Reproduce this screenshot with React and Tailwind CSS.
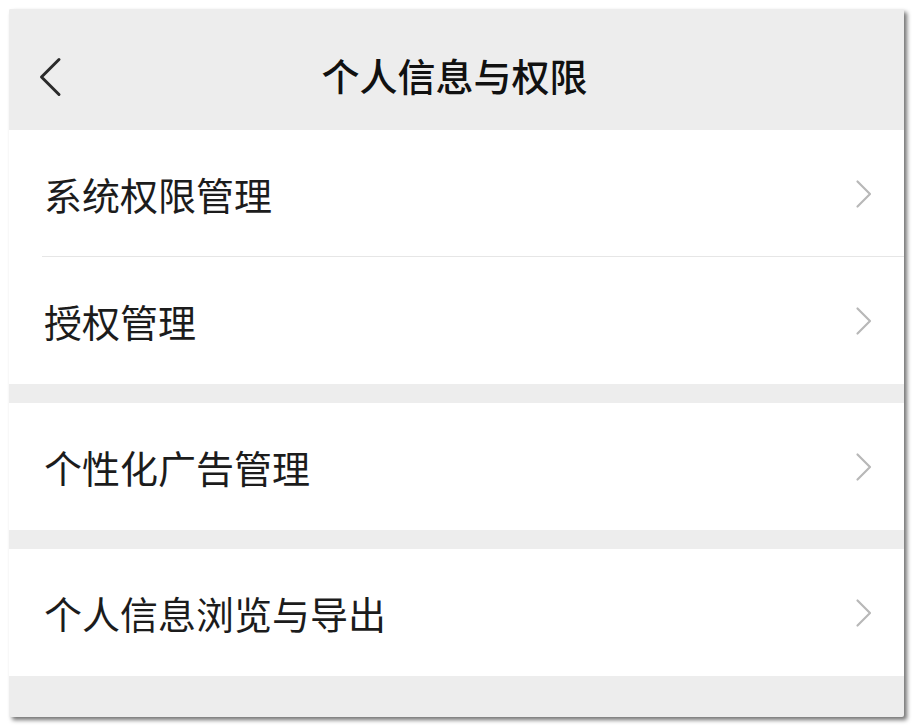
import React from "react";

const Chevron = () => (
  <svg width="18" height="30" viewBox="0 0 18 30" className="shrink-0">
    <path d="M2.5 2.5 L15 15 L2.5 27.5" fill="none" stroke="#b8b8b8" strokeWidth="2.2" strokeLinecap="round" strokeLinejoin="round" />
  </svg>
);

const Row = ({ label, divider }) => (
  <div className="relative flex h-[127px] items-center justify-between bg-white pl-[35px] pr-[31px]">
    <span className="text-[38px] leading-none text-[#1c1c1c]">{label}</span>
    <Chevron />
    {divider && <div className="absolute bottom-0 left-[33px] right-0 h-px bg-[#e6e6e6]" />}
  </div>
);

export default function App() {
  return (
    <div className="h-[728px] w-[915px] bg-white pl-[9px] pt-[9px]" style={{ fontFamily: '"Noto Sans CJK SC", "Noto Sans", sans-serif' }}>
      <div className="flex h-[708px] w-[895px] flex-col overflow-hidden rounded-[2px] bg-[#ededed] shadow-[3px_3px_4px_rgba(0,0,0,0.55)]">
        <div className="relative flex h-[121px] shrink-0 items-center justify-center bg-[#ededed]">
          <svg width="26" height="42" viewBox="0 0 26 42" className="absolute left-[28px] top-[47px]">
            <path d="M22 3.5 L4.5 21 L22 38.5" fill="none" stroke="#2a2a2a" strokeWidth="3" strokeLinecap="round" strokeLinejoin="round" />
          </svg>
          <span className="mt-[10px] pr-[4px] text-[38px] font-medium leading-none text-[#111]">个人信息与权限</span>
        </div>
        <Row label="系统权限管理" divider />
        <Row label="授权管理" />
        <div className="h-[19px] shrink-0" />
        <Row label="个性化广告管理" />
        <div className="h-[19px] shrink-0" />
        <Row label="个人信息浏览与导出" />
        <div className="flex-1" />
      </div>
    </div>
  );
}
